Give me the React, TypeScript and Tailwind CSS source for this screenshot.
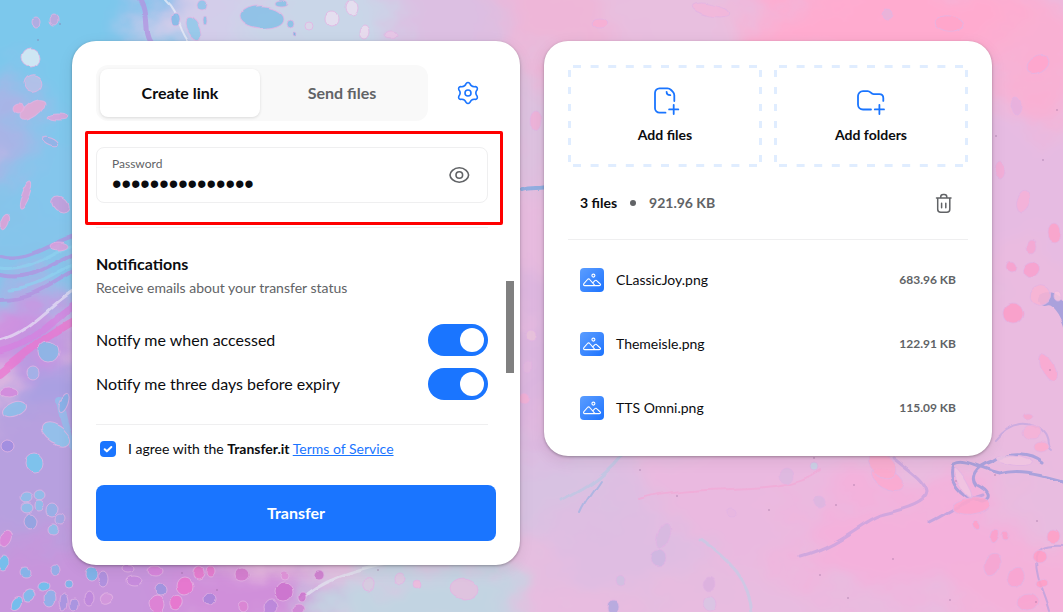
import type { ReactNode } from "react";

type Blob = [cx: number, cy: number, rx: number, ry: number, fill: string, angle?: number];

const washes: Blob[] = [
  [60, 60, 120, 130, "#7cc8ec"],
  [180, 10, 40, 40, "#8db4ea"],
  [20, 250, 90, 90, "#86c4ea"],
  [60, 180, 50, 60, "#84c6ec"],
  [0, 130, 34, 50, "#a9b4e6"],
  [20, 330, 60, 30, "#cf8fe0"],
  [60, 400, 60, 60, "#aaa0e2"],
  [20, 500, 90, 90, "#b7a0df"],
  [100, 600, 160, 60, "#c795dc"],
  [250, 600, 90, 40, "#d08fda"],
  [240, 20, 90, 60, "#d3cdea"],
  [360, 20, 120, 60, "#c9d6e8"],
  [450, 10, 60, 70, "#dcbfe2"],
  [560, 20, 70, 60, "#eeb6d8"],
  [680, 10, 90, 40, "#e8bfdf"],
  [900, 20, 160, 50, "#ffabcf"],
  [1040, 60, 50, 60, "#f9b0d3"],
  [1030, 200, 70, 90, "#e6bbe2"],
  [1040, 360, 70, 110, "#eabbe0"],
  [530, 120, 22, 90, "#dcc3e0"],
  [530, 380, 30, 110, "#dcb6e0"],
  [590, 500, 90, 50, "#d8c2e2"],
  [420, 600, 120, 44, "#c2d4e2"],
  [640, 540, 90, 60, "#dfbde2"],
  [760, 500, 110, 60, "#eab9e0"],
  [900, 540, 120, 60, "#f4b1dc"],
  [1040, 590, 80, 50, "#f4b2da"],
];

const streams: [d: string, stroke: string, width: number][] = [
  ["M0 255C40 265 60 225 110 232M0 275C45 285 60 245 110 248M0 300C50 300 60 265 110 260", "#b48fe0", 4],
  ["M0 340C40 330 60 285 110 275", "#e7e3f6", 3],
  ["M0 352C50 340 60 300 110 290", "#d77fe0", 7],
  ["M0 375C30 350 55 330 80 318", "#ee72cf", 8],
  ["M0 268C40 274 62 235 110 240M8 290C50 288 60 260 110 254", "#8ed3f0", 3],
  ["M60 400C66 440 76 450 90 470", "#8fc4ee", 8],
  ["M140 0C150 20 142 32 150 44", "#b48fe0", 5],
  ["M165 0C180 14 176 28 190 44", "#eef0f8", 2],
  ["M520 190C530 186 540 190 548 186", "#6fa8e2", 4],
  ["M300 600C320 580 350 570 400 560", "#e3e6f0", 3],
  ["M560 500C580 490 600 480 620 455", "#b9c9e4", 3],
  ["M600 480C590 495 585 500 580 512", "#9db3e2", 2],
  ["M893 458C908 470 926 482 927 492C926 502 910 508 880 515C860 522 840 545 800 556", "#c3a2df", 3],
  ["M1063 480C1040 474 1020 468 1000 474C980 470 965 458 952 464C946 480 960 496 980 502C992 500 988 492 976 486C970 478 974 468 992 462C1010 450 1030 452 1042 462", "#8f98da", 3],
  ["M930 522C950 512 965 500 982 496", "#b29fdf", 3],
  ["M1044 300C1054 296 1066 310 1070 330", "#8f98da", 12],
  ["M1063 545C1045 544 1034 548 1036 560C1036 580 1044 590 1050 612", "#b6a0de", 2],
  ["M996 440C1012 420 1030 420 1042 432C1050 440 1044 446 1050 450", "#bfa6e0", 2],
  ["M700 540C730 560 750 580 752 612", "#c4cde6", 3],
  ["M640 500C700 480 780 500 820 470", "#f2a9d6", 2],
];

const cells: Blob[] = [
  [262, 17, 21, 11, "#86bfe6", 5],
  [193, 29, 6, 12, "#8fc8ea", -30],
  [175, 19, 4, 6, "#80b8e6"],
  [202, 6, 5, 6, "#8cc4ea"],
  [281, 3, 6, 3, "#86bfe6"],
  [290, 24, 4, 4, "#86bfe6"],
  [294, 34, 2, 2, "#74b0e2"],
  [205, 22, 2, 4, "#86bfe6"],
  [350, 7, 6, 8, "#e9dff0"],
  [332, 20, 6, 7, "#e9dff0"],
  [364, 32, 5, 7, "#ecdcee"],
  [310, 26, 4, 4, "#dcd6ea"],
  [392, 36, 6, 4, "#e9c6e6"],
  [31, 58, 9, 9, "#dcecf4"],
  [32, 83, 9, 8, "#b9bfe8", -20],
  [36, 22, 4, 5, "#b9a8e0"],
  [53, 21, 4, 5, "#c7a4dc"],
  [33, 110, 15, 7, "#e9a8d4", -35],
  [18, 109, 6, 5, "#eda6d4"],
  [58, 117, 10, 3, "#dda4da"],
  [25, 194, 4, 16, "#dda0d8", 20],
  [60, 205, 9, 7, "#c99cda", 40],
  [50, 140, 9, 4, "#94b2e6", 20],
  [5, 222, 4, 8, "#e3a0d6", 20],
  [60, 245, 10, 4, "#dca0dc"],
  [49, 352, 10, 11, "#86b8e6"],
  [33, 372, 6, 6, "#a0b4e8"],
  [64, 403, 4, 10, "#86b0e6", 20],
  [55, 435, 16, 9, "#8ec4ec", 30],
  [35, 463, 9, 9, "#74c8ee"],
  [14, 410, 12, 7, "#8cc0ea", -20],
  [8, 446, 7, 6, "#a08ce0"],
  [9, 393, 9, 5, "#d487dc"],
  [26, 497, 6, 5, "#8cc0ea"],
  [40, 495, 6, 5, "#8cc0ea"],
  [27, 507, 6, 5, "#8cc0ea"],
  [40, 505, 5, 5, "#8cc0ea"],
  [54, 510, 6, 7, "#94b2e6"],
  [30, 521, 7, 8, "#8fa6e2"],
  [54, 529, 5, 5, "#8cc0ea"],
  [62, 520, 5, 5, "#a0a8e4"],
  [6, 540, 6, 9, "#de85d8", 20],
  [4, 564, 5, 7, "#6ac4ee"],
  [25, 573, 5, 5, "#7cb8ea"],
  [42, 587, 6, 5, "#66c4ee"],
  [28, 595, 6, 6, "#78c0ec", 30],
  [16, 602, 5, 7, "#66c4ee", 30],
  [54, 569, 5, 6, "#8cb0e8"],
  [68, 585, 4, 4, "#74b8ea"],
  [50, 600, 6, 8, "#8ab4ea"],
  [64, 602, 4, 8, "#a695e0"],
  [74, 604, 4, 6, "#a695e0"],
  [88, 598, 5, 7, "#bd86dc"],
  [91, 574, 6, 7, "#74b8ea"],
  [103, 579, 5, 8, "#ad90de"],
  [107, 598, 7, 5, "#d498dc", -20],
  [134, 581, 8, 5, "#c68adc"],
  [128, 569, 6, 4, "#c68adc"],
  [156, 571, 7, 5, "#d882da"],
  [198, 572, 5, 6, "#e878cc", 20],
  [209, 571, 4, 5, "#e878cc"],
  [184, 585, 8, 9, "#ea74cc"],
  [160, 590, 6, 6, "#9a94de"],
  [177, 601, 6, 7, "#ea74cc", 30],
  [156, 604, 8, 8, "#e080d4"],
  [209, 599, 6, 6, "#a884da"],
  [243, 574, 7, 7, "#d478cc"],
  [283, 591, 9, 9, "#cc72cc"],
  [302, 597, 4, 5, "#cc72cc"],
  [319, 574, 5, 5, "#cc78cc"],
  [284, 576, 4, 4, "#e090d8"],
  [243, 607, 5, 5, "#dc84d4"],
  [272, 606, 7, 7, "#b886da"],
  [300, 609, 6, 5, "#d084d4"],
  [369, 585, 6, 7, "#d8cadf", 20],
  [400, 580, 5, 6, "#e0c6e0"],
  [417, 585, 4, 4, "#f0b8dc"],
  [465, 590, 14, 10, "#e4c0de"],
  [531, 335, 5, 5, "#eac3dc"],
  [527, 366, 5, 6, "#e4b8e0"],
  [525, 398, 5, 6, "#f4b0d6"],
  [535, 120, 6, 10, "#f0b0d8"],
  [620, 580, 5, 6, "#cfc0e2"],
  [612, 607, 6, 7, "#b0a8de"],
  [664, 536, 6, 14, "#d6b8e0", 15],
  [658, 559, 8, 8, "#ceb6e2"],
  [711, 584, 7, 7, "#dcb0de"],
  [711, 604, 7, 8, "#d8c6e4"],
  [731, 513, 5, 4, "#e8b6e0"],
  [786, 475, 7, 8, "#dcb8e0"],
  [814, 467, 4, 4, "#c6d4e6"],
  [819, 503, 6, 6, "#dcb6e0"],
  [888, 478, 17, 9, "#fba9d0", 30],
  [882, 464, 16, 10, "#faaace", 40],
  [970, 506, 18, 8, "#fda6cc", -6],
  [1014, 460, 18, 5, "#f0c6e2", 8],
  [962, 482, 4, 18, "#f0c6e2", -30],
  [1032, 432, 8, 7, "#f6b2d6"],
  [1040, 447, 7, 5, "#fbaace"],
  [1028, 416, 5, 3, "#f6a8d0"],
  [1055, 535, 6, 7, "#ff9fc6"],
  [975, 524, 3, 5, "#ff9fc8", -30],
  [994, 536, 4, 8, "#fba0ca", 15],
  [1004, 536, 3, 5, "#fba0ca"],
  [992, 565, 8, 11, "#f6a6d2", 15],
  [1017, 577, 8, 10, "#f8a4d0", 20],
  [1039, 556, 7, 7, "#ff9ec6"],
  [1042, 584, 6, 4, "#ff9ec6"],
  [1029, 602, 10, 9, "#f8a4d0"],
  [1013, 313, 9, 10, "#fb9cc8", -20],
  [1031, 270, 9, 8, "#f8a0cc", -40],
  [1011, 266, 5, 6, "#f8a0cc"],
  [1040, 296, 10, 9, "#f8b4d4", -30],
  [1057, 297, 4, 5, "#f8c4de"],
  [1049, 367, 7, 16, "#fba8d0", -20],
  [1033, 246, 5, 7, "#f4a6d2"],
  [1054, 233, 6, 9, "#fba2ca"],
  [1022, 200, 7, 12, "#f6b0d8", 15],
  [1016, 108, 5, 9, "#e6b0de"],
  [1000, 170, 5, 9, "#f4acd6"],
  [887, 16, 5, 5, "#e6b4da"],
  [948, 24, 14, 8, "#ffa6ca", 10],
  [1038, 64, 12, 7, "#ffa6cc", -30],
  [600, 22, 9, 5, "#f8aed4"],
  [710, 10, 18, 6, "#f2b6da", 12],
];

const specks: [number, number][] = [
  [60, 24], [38, 40], [92, 60], [996, 136], [1050, 370], [836, 505], [854, 485], [956, 481],
  [995, 475], [1037, 521], [769, 510], [893, 559], [820, 575], [848, 598], [950, 600], [677, 496],
  [640, 470], [378, 570], [182, 573], [217, 590], [1057, 110], [1043, 160], [814, 458], [1036, 602],
];

function PaintBackdrop() {
  return (
    <svg
      className="absolute inset-0 -z-10 h-full w-full"
      viewBox="0 0 1063 612"
      preserveAspectRatio="xMidYMid slice"
      aria-hidden="true"
    >
      <defs>
        <filter id="wash" x="-20%" y="-20%" width="140%" height="140%">
          <feGaussianBlur stdDeviation="15" result="soft" />
          <feTurbulence type="fractalNoise" baseFrequency="0.014 0.018" numOctaves="4" seed="8" result="noise" />
          <feDisplacementMap in="soft" in2="noise" scale="80" xChannelSelector="R" yChannelSelector="G" />
        </filter>
        <filter id="ripple" x="-10%" y="-10%" width="120%" height="120%">
          <feTurbulence type="fractalNoise" baseFrequency="0.03" numOctaves="1" seed="4" result="noise" />
          <feDisplacementMap in="SourceGraphic" in2="noise" scale="9" xChannelSelector="R" yChannelSelector="G" />
          <feGaussianBlur stdDeviation="0.7" />
        </filter>
      </defs>
      <rect width="1063" height="612" fill="#e8bce0" />
      <g filter="url(#wash)">
        <rect x="-60" y="-60" width="1183" height="732" fill="#e8bce0" />
        {washes.map(([cx, cy, rx, ry, fill], i) => (
          <ellipse key={i} cx={cx} cy={cy} rx={rx} ry={ry} fill={fill} />
        ))}
      </g>
      <g filter="url(#ripple)">
        <g fill="none" strokeLinecap="round" opacity="0.7">
          {streams.map(([d, stroke, width], i) => (
            <path key={i} d={d} stroke={stroke} strokeWidth={width} />
          ))}
        </g>
        {cells.map(([cx, cy, rx, ry, fill, angle = 0], i) => (
          <ellipse
            key={i}
            cx={cx}
            cy={cy}
            rx={rx}
            ry={ry}
            fill={fill}
            fillOpacity="0.85"
            stroke="#e2b4e4"
            strokeOpacity="0.8"
            strokeWidth="1"
            transform={`rotate(${angle} ${cx} ${cy})`}
          />
        ))}
      </g>
      <g fill="#8a5f8f" opacity="0.6">
        {specks.map(([x, y], i) => (
          <circle key={i} cx={x} cy={y} r="0.8" />
        ))}
      </g>
    </svg>
  );
}

function Icon({ box = 24, className, width = 1.5, children }: { box?: number; className: string; width?: number; children: ReactNode }) {
  return (
    <svg
      viewBox={`0 0 ${box} ${box}`}
      className={className}
      fill="none"
      stroke="currentColor"
      strokeWidth={width}
      strokeLinecap="round"
      strokeLinejoin="round"
      aria-hidden="true"
    >
      {children}
    </svg>
  );
}

const polar = (radius: number, degrees: number) => {
  const a = (degrees * Math.PI) / 180;
  return `${(12 + radius * Math.cos(a)).toFixed(2)} ${(12 + radius * Math.sin(a)).toFixed(2)}`;
};

const gearPath =
  `M${polar(9.7, -101)}` +
  [-90, -30, 30, 90, 150, 210]
    .map((a) => `Q${polar(11.6, a)} ${polar(9.7, a + 11)}Q${polar(6.5, a + 30)} ${polar(9.7, a + 49)}`)
    .join("") +
  "Z";

function GearIcon() {
  return (
    <Icon className="size-6" width={1.6}>
      <path d={gearPath} />
      <circle cx="12" cy="12" r="3" />
    </Icon>
  );
}

function EyeIcon() {
  return (
    <Icon className="size-6" width={1.6}>
      <path d="M3 12C3 9.200 6.600 4.800 12.300 4.800S21.600 9.200 21.600 12 18 19.200 12.300 19.200 3 14.800 3 12Z" />
      <circle cx="12.300" cy="12" r="3.300" />
    </Icon>
  );
}

function TrashIcon() {
  return (
    <Icon className="size-6">
      <path d="M4.500 7.100h14.500M8.700 7V5.900a2.500 2.500 0 0 1 2.500-2.500h1.100a2.500 2.500 0 0 1 2.500 2.500V7M5.700 7.100v11.200a3 3 0 0 0 3 3h6.100a3 3 0 0 0 3-3V7.100M9.600 12.200v4.600M13.800 12.200v4.600" />
    </Icon>
  );
}

function FilePlusIcon() {
  return (
    <Icon box={32} className="size-8" width={1.8}>
      <path d="M16.500 27.700H10.500a4.500 4.500 0 0 1-4.500-4.500V7.900a4.500 4.500 0 0 1 4.500-4.500H18.500c1.500 0 2.500.500 3.600 1.600l1.600 1.600c1.100 1.100 1.600 2.100 1.600 3.600V16" />
      <path d="M17.600 6.800c0 2.100 1.400 3.400 3.700 3.400M24.700 19.800v9.200M20.100 24.400h9.200" />
    </Icon>
  );
}

function FolderPlusIcon() {
  return (
    <Icon box={32} className="size-8" width={1.8}>
      <path d="M16 24.500H8a5 5 0 0 1-5-5v-8.400a5 5 0 0 1 5-5h4.700c1.200 0 2 .500 2.800 1.300.900.900 1.900 1.700 3.100 1.700h5.700c2.400 0 4 1.600 4 4v2.800" />
      <path d="M24.400 19.800v9.200M19.800 24.400h9.200" />
    </Icon>
  );
}

function PictureIcon() {
  return (
    <span className="flex size-6 shrink-0 rounded bg-linear-to-br from-[#5b9dff] to-[#1a73ff] text-white">
      <Icon className="size-6" width={1.1}>
        <circle cx="13.400" cy="7.600" r="1.500" />
        <path d="M4.800 17.600C3.600 17.600 3.200 16.600 3.900 15.700L7.500 11.500c.7-.8 1.600-.8 2.200 0L15 17.600ZM13 14.600l1.900-1.900c.7-.6 1.400-.6 2 .1l3.300 3.200c.8.800.3 1.600-.8 1.600H15" />
      </Icon>
    </span>
  );
}

function DashedOutline() {
  return (
    <svg className="absolute inset-0 h-full w-full" stroke="#e0edff" strokeWidth="3" aria-hidden="true">
      <line x1="5" x2="99%" y1="1.5" y2="1.5" strokeDasharray="8 9.6" />
      <line x1="5" x2="99%" y1="100.5" y2="100.5" strokeDasharray="8 9.6" />
      <line x1="1.5" x2="1.5" y1="5" y2="99%" strokeDasharray="7 10" />
      <line x1="192.5" x2="192.5" y1="5" y2="99%" strokeDasharray="7 10" />
    </svg>
  );
}

function AddTile({ label, children }: { label: string; children: ReactNode }) {
  return (
    <button type="button" className="relative flex h-[102px] flex-1 flex-col items-center justify-center gap-2 pb-0.5">
      <DashedOutline />
      <span className="text-[#1a75ff]">{children}</span>
      <span className="text-sm font-bold">{label}</span>
    </button>
  );
}

function SwitchRow({ id, label }: { id: string; label: string }) {
  return (
    <div className="flex h-8 items-center justify-between">
      <label htmlFor={id}>{label}</label>
      <input
        id={id}
        type="checkbox"
        role="switch"
        defaultChecked
        className="flex h-8 w-15 appearance-none rounded-full bg-gray-300 p-1 before:size-6 before:rounded-full before:bg-white before:content-[''] checked:justify-end checked:bg-[#1a75ff]"
      />
    </div>
  );
}

const files = [
  { name: "CLassicJoy.png", size: "683.96 KB" },
  { name: "Themeisle.png", size: "122.91 KB" },
  { name: "TTS Omni.png", size: "115.09 KB" },
];

export default function App() {
  return (
    <div className="relative isolate min-h-screen overflow-hidden bg-[#e8bce0] font-[Lato,'Open_Sans',sans-serif] text-base text-[#0b0c0f]">
      <PaintBackdrop />
      <main className="flex items-start gap-6 pt-[41px] pr-[71px] pb-[47px] pl-[72px]">
        <form className="relative flex-1 rounded-3xl bg-white p-6 shadow-[0_1px_3px_rgba(0,0,0,0.3),0_4px_16px_rgba(0,0,0,0.08)]">
          <div className="pr-2">
            <div className="flex items-center justify-between">
              <div role="tablist" className="flex h-14 w-[332px] rounded-xl bg-[#f9f9f9] p-1">
                <button
                  type="button"
                  role="tab"
                  aria-selected="true"
                  className="w-40 rounded-lg bg-white font-bold shadow-[0_1px_3px_rgba(0,0,0,0.12)]"
                >
                  Create link
                </button>
                <button type="button" role="tab" aria-selected="false" className="flex-1 font-bold text-[#616366]">
                  Send files
                </button>
              </div>
              <button type="button" aria-label="Settings" className="p-2 text-[#1a75ff]">
                <GearIcon />
              </button>
            </div>

            <div className="relative mt-[26px]">
              <div className="flex h-14 items-center justify-between rounded-lg border border-[#efeff0] pr-4 pl-[15px]">
                <div className="flex flex-1 flex-col gap-0.5">
                  <label htmlFor="password" className="text-xs leading-4 text-[#616366]">
                    Password
                  </label>
                  <input
                    id="password"
                    type="password"
                    defaultValue="transferfiles25"
                    autoComplete="off"
                    className="h-5 w-full bg-transparent font-['Liberation_Sans',sans-serif] text-[27px] leading-5 outline-none"
                  />
                </div>
                <button type="button" aria-label="Show password" className="text-[#616366]">
                  <EyeIcon />
                </button>
              </div>
              <div className="pointer-events-none absolute -top-4 -right-[15px] -bottom-[22px] -left-[11px] rounded-xs border-3 border-[#ff0000]" />
            </div>

            <hr className="mt-6 border-[#efeff0]" />
            <h2 className="mt-6 leading-6 font-bold">Notifications</h2>
            <p className="text-sm leading-6 text-[#616366]">Receive emails about your transfer status</p>
            <div className="mt-6 flex flex-col gap-3">
              <SwitchRow id="notify-access" label="Notify me when accessed" />
              <SwitchRow id="notify-expiry" label="Notify me three days before expiry" />
            </div>
            <hr className="mt-6 border-[#efeff0]" />

            <div className="mt-3 flex h-6 items-center gap-3 pl-1 text-sm">
              <span className="relative flex">
                <input
                  id="terms"
                  type="checkbox"
                  defaultChecked
                  className="size-4 appearance-none rounded bg-[#1a75ff]"
                />
                <Icon className="pointer-events-none absolute inset-0 size-4 text-white" width={3}>
                  <path d="M7 12.300l3.300 3.200L17 9" />
                </Icon>
              </span>
              <label htmlFor="terms">
                I agree with the <strong>Transfer.it</strong>{" "}
                <a href="#terms" className="text-[#1a75ff] underline">
                  Terms of Service
                </a>
              </label>
            </div>
          </div>
          <button type="submit" className="mt-6 h-14 w-full rounded-lg bg-[#1a75ff] font-bold text-white">
            Transfer
          </button>
          <div className="absolute top-60 right-1.5 h-[92px] w-2 bg-[#808080]" />
        </form>

        <section className="flex-1 rounded-3xl bg-white px-6 pt-6 pb-4 shadow-[0_1px_3px_rgba(0,0,0,0.3),0_4px_16px_rgba(0,0,0,0.08)]">
          <div className="flex gap-3">
            <AddTile label="Add files">
              <FilePlusIcon />
            </AddTile>
            <AddTile label="Add folders">
              <FolderPlusIcon />
            </AddTile>
          </div>
          <div className="flex h-[72px] items-center px-3 text-sm font-bold">
            <span>3 files</span>
            <span className="mx-[13px] size-1.5 rounded-full bg-[#616366]" />
            <span className="text-[#616366]">921.96 KB</span>
            <button type="button" aria-label="Remove all files" className="ml-auto text-[#616366]">
              <TrashIcon />
            </button>
          </div>
          <hr className="border-[#efeff0]" />
          <ul className="pt-2">
            {files.map((file) => (
              <li key={file.name} className="flex h-16 items-center gap-3 px-3">
                <PictureIcon />
                <span className="text-sm">{file.name}</span>
                <span className="ml-auto text-xs font-bold text-[#616366]">{file.size}</span>
              </li>
            ))}
          </ul>
        </section>
      </main>
    </div>
  );
}
